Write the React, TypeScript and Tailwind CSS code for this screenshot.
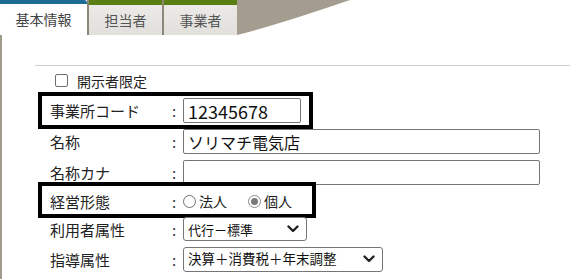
import React from 'react';

const jp = { fontFamily: '"Noto Sans CJK JP", "Noto Sans", sans-serif' };

const Chevron: React.FC = () => (
  <svg width="12" height="8" viewBox="0 0 12 8" className="shrink-0">
    <path d="M1.5 1.5 L6 6 L10.5 1.5" fill="none" stroke="#222" strokeWidth={2.4} strokeLinecap="round" strokeLinejoin="round" />
  </svg>
);

interface RowProps {
  label: string;
  height: string;
  children: React.ReactNode;
  box?: React.ReactNode;
}

const Row: React.FC<RowProps> = ({ label, height, children, box }) => (
  <div className={`relative flex items-center ${height}`}>
    <div className="w-[122px] text-[15px] text-[#222] leading-none">{label}</div>
    <div className="w-[11px] text-[15px] text-[#333] leading-none">:</div>
    {children}
    {box}
  </div>
);

export default function App() {
  return (
    <div className="w-[570px] h-[279px] overflow-hidden bg-white" style={jp}>
      {/* タブ */}
      <div className="flex h-[35px]">
        <div className="w-[87px] h-[35px] bg-white border-t-4 border-[#1c6c95] rounded-tr-[3px] flex items-center justify-center text-[14px] text-[#444] pb-[1px]">
          基本情報
        </div>
        <div className="w-[2px] h-[35px] bg-[#8d8779]" />
        <div className="w-[73px] h-[35px] bg-gradient-to-b from-[#eceae7] to-[#e2e0dc] border-t-[5px] border-[#5b7e12] flex items-center justify-center text-[14px] text-[#555]">
          担当者
        </div>
        <div className="w-[2px] h-[35px] bg-[#8d8779]" />
        <div className="w-[73px] h-[35px] bg-gradient-to-b from-[#eceae7] to-[#e2e0dc] border-t-[5px] border-[#5b7e12] flex items-center justify-center text-[14px] text-[#555]">
          事業者
        </div>
        <svg width="113" height="35" viewBox="0 0 113 35" className="shrink-0">
          <path d="M0 0 H113 Q40 25 0 35 Z" fill="#a49d8f" />
        </svg>
      </div>

      {/* 本文 */}
      <div className="border-l-2 border-[#a19b8d] h-[244px] pt-[30px]">
        <div className="ml-[33px] border-t border-[#cfcfcf]" />

        <div className="ml-[53px] h-[29px] flex items-center gap-[9px]">
          <div className="w-[13px] h-[13px] border border-[#6f6f6f] rounded-[2px] bg-white" />
          <span className="text-[14px] text-[#222] leading-none">開示者限定</span>
        </div>

        <div className="ml-[48px]">
          <Row
            label="事業所コード"
            height="h-[31px]"
            box={<div className="absolute -left-[12px] -top-[3px] w-[275px] h-[37px] border-4 border-black pointer-events-none" />}
          >
            <div className="w-[118px] h-[25px] border border-[#767676] rounded-[2px] px-[4px] flex items-center text-[18px] text-[#111] leading-none">
              12345678
            </div>
          </Row>
          <Row label="名称" height="h-[31px]">
            <div className="w-[357px] h-[25px] border border-[#767676] rounded-[2px] px-[4px] flex items-center text-[16px] text-[#111] leading-none">
              ソリマチ電気店
            </div>
          </Row>
          <Row label="名称カナ" height="h-[31px]">
            <div className="w-[357px] h-[25px] border border-[#767676] rounded-[2px]" />
          </Row>
          <Row
            label="経営形態"
            height="h-[26px]"
            box={<div className="absolute -left-[12px] -top-[6px] w-[278px] h-[36px] border-4 border-black pointer-events-none" />}
          >
            <div className="flex items-center gap-[3px]">
              <div className="w-[13px] h-[13px] rounded-full border border-[#6f6f6f] bg-white" />
              <span className="text-[14px] text-[#222] leading-none">法人</span>
            </div>
            <div className="flex items-center gap-[3px] ml-[21px]">
              <div className="w-[13px] h-[13px] rounded-full border border-[#8a8a8a] bg-white flex items-center justify-center">
                <div className="w-[7px] h-[7px] rounded-full bg-[#7a7a7a]" />
              </div>
              <span className="text-[14px] text-[#222] leading-none">個人</span>
            </div>
          </Row>
          <Row label="利用者属性" height="h-[30px]">
            <div className="w-[124px] h-[24px] border border-[#767676] rounded-[3px] pl-[4px] pr-[7px] flex items-center justify-between text-[13px] text-[#111] leading-none">
              <span>代行－標準</span>
              <Chevron />
            </div>
          </Row>
          <Row label="指導属性" height="h-[30px]">
            <div className="w-[200px] h-[25px] border border-[#767676] rounded-[3px] pl-[4px] pr-[7px] flex items-center justify-between text-[13.5px] text-[#111] leading-none">
              <span>決算＋消費税＋年末調整</span>
              <Chevron />
            </div>
          </Row>
        </div>
      </div>
    </div>
  );
}
